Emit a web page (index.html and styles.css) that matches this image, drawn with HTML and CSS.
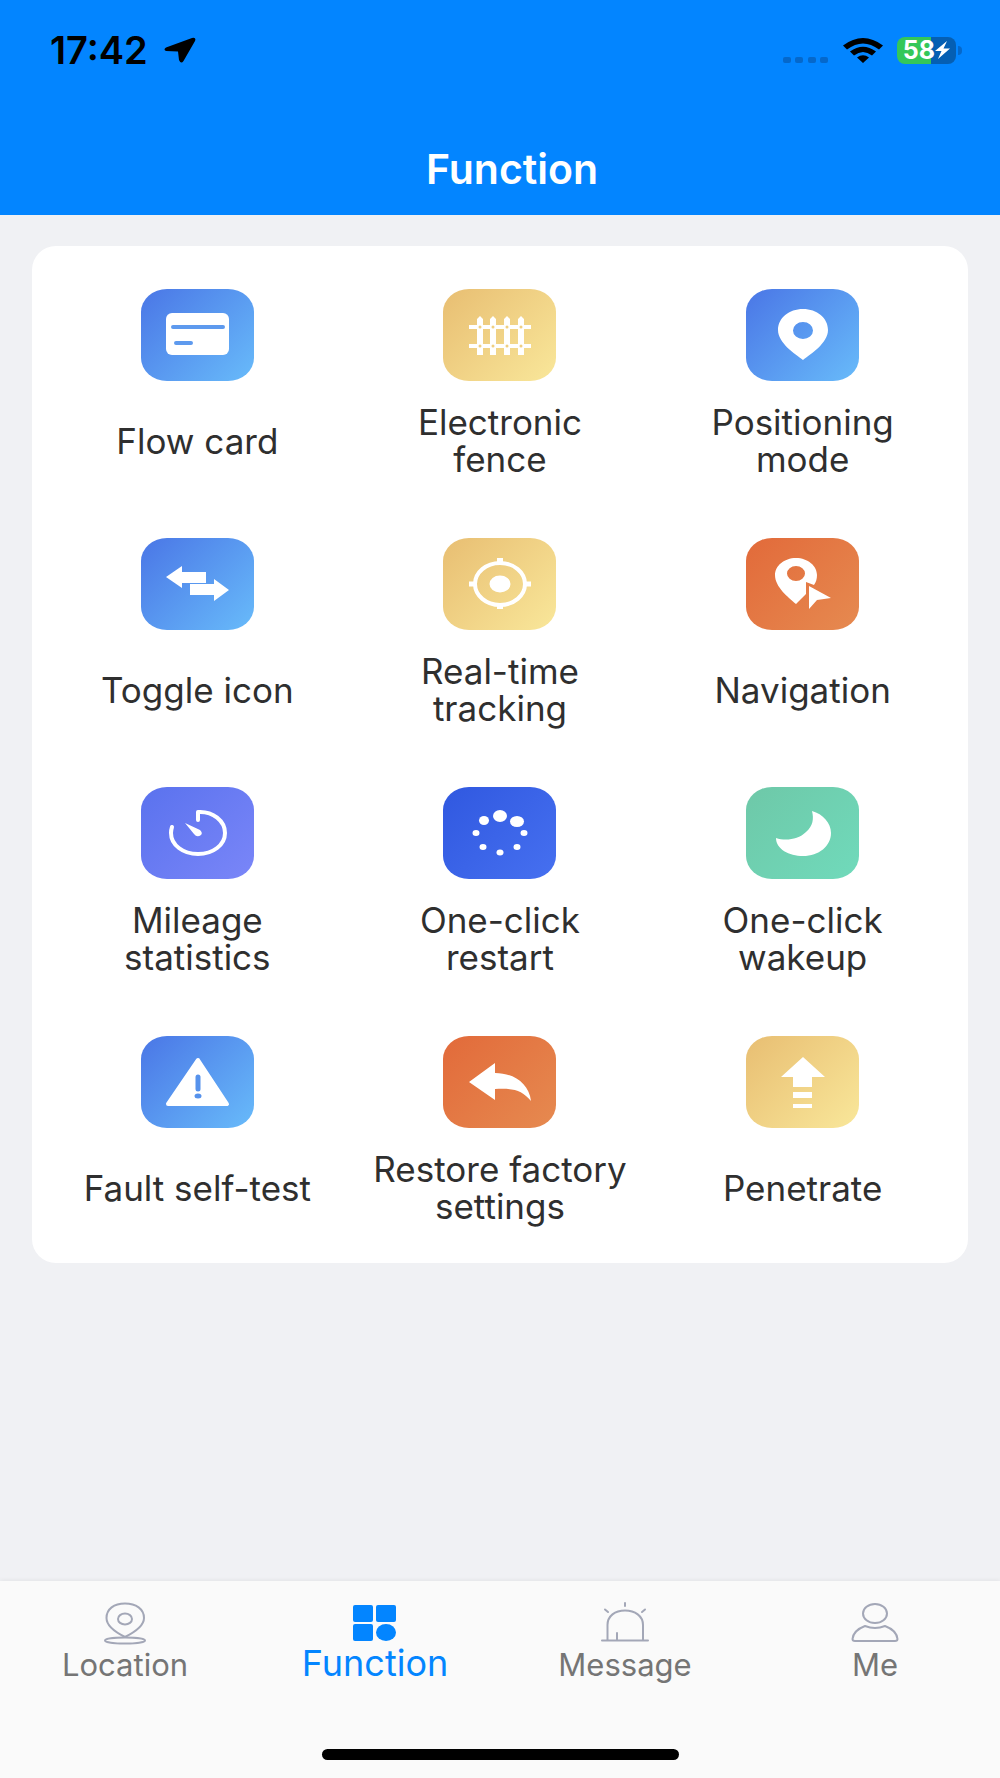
FILE: index.html
```html
<!DOCTYPE html>
<html lang="en">
<head>
  <meta charset="UTF-8" />
  <meta name="viewport" content="width=device-width, initial-scale=1.0"/>
  <title>Function</title>
  <link rel="stylesheet" href="styles.css">
</head>
<body>
  <header class="header">
    <div class="status-bar">
      <span class="clock">17:42</span>
      <svg class="arrow" width="32" height="26" viewBox="0 0 32 26"><path d="M28 1 2 10.500Q-1 12.500 2 14L14 14.500 15 23Q17 27.500 19.500 24L31 4Q32.500 0 28 1Z"/></svg>
      <div class="status-icons">
        <svg width="46" height="7" viewBox="0 0 46 7" fill="#0568cb"><rect width="8" height="6" rx="2"/><rect x="12" width="8" height="6" rx="2"/><rect x="25" width="8" height="6" rx="2"/><rect x="37" width="8" height="6" rx="2"/></svg>
        <svg width="40" height="25" viewBox="0 0 40 25"><path d="M0 7.500Q20-7.500 40 7.500L36 11.500Q20-.5 4 11.500ZM7 13.500Q20 4 33 13.500L29 17.500Q20 10.500 11 17.500ZM14 19.500Q20 15 26 19.500L20 25Z"/></svg>
        <div class="battery">
          <span class="battery-level">58</span>
          <svg width="15" height="18" viewBox="0 0 15 18"><path d="M12 0 0 10H6.500L3 18 15 7.500H8.500Z" fill="#fff"/></svg>
        </div>
      </div>
    </div>
    <h1>Function</h1>
  </header>

  <main>
    <div class="card">
      <button class="item">
        <svg class="icon blue" viewBox="0 0 113 92">
          <rect x="25" y="24" width="63" height="42" rx="6" fill="#fff"/>
          <path d="M32 38H82M35 54H50" stroke="#5e9aee" stroke-width="4" stroke-linecap="round"/>
        </svg>
        <span class="label">Flow card</span>
      </button>
      <button class="item">
        <svg class="icon sand" viewBox="0 0 113 92" fill="#fff">
          <path d="M26 36H88V40H26ZM26 55H88V59H26Z"/>
          <path d="M34 66V30L37 27 40 30V66ZM47 66V30L50 27 53 30V66ZM61 66V30L64 27 67 30V66ZM75 66V30L78 27 81 30V66Z"/>
          <g fill="#efcf80"><circle cx="37" cy="38" r="1.500"/><circle cx="50" cy="38" r="1.500"/><circle cx="64" cy="38" r="1.500"/><circle cx="78" cy="38" r="1.500"/><circle cx="37" cy="57" r="1.500"/><circle cx="50" cy="57" r="1.500"/><circle cx="64" cy="57" r="1.500"/><circle cx="78" cy="57" r="1.500"/></g>
        </svg>
        <span class="label">Electronic fence</span>
      </button>
      <button class="item">
        <svg class="icon blue" viewBox="0 0 113 92">
          <path fill="#fff" fill-rule="evenodd" d="M57 71C49 65 32 54 32 41 32 29 43 20 57 20S82 29 82 41C82 54 65 65 57 71ZM57 33A10 8.500 0 1 0 57 50 10 8.500 0 1 0 57 33Z"/>
        </svg>
        <span class="label">Positioning mode</span>
      </button>

      <button class="item">
        <svg class="icon blue" viewBox="0 0 113 92" fill="#fff">
          <path d="M25 39 41 28V34H65V45H41V50ZM88 52 73 41V46H49V57H73V63Z"/>
        </svg>
        <span class="label">Toggle icon</span>
      </button>
      <button class="item">
        <svg class="icon sand" viewBox="0 0 113 92" fill="none" stroke="#fff">
          <ellipse cx="57" cy="46" rx="25" ry="21" stroke-width="4"/>
          <ellipse cx="57" cy="46" rx="10.500" ry="8.500" fill="#fff" stroke="none"/>
          <path d="M57 20V27M57 65V71" stroke-width="6"/><path d="M26 46H32M82 46H88" stroke-width="5"/>
        </svg>
        <span class="label">Real-time tracking</span>
      </button>
      <button class="item">
        <svg class="icon orange" viewBox="0 0 113 92" fill="#fff">
          <path fill-rule="evenodd" d="M50 66C42 59 29 49 29 37 29 28 38 20 50 20S71 28 71 37C71 41 70 44 68 47L60 44V56ZM50 28A9 7.500 0 1 0 50 43 9 7.500 0 1 0 50 28Z"/>
          <path d="M63 48 85 60 71 62 63 71Z"/>
        </svg>
        <span class="label">Navigation</span>
      </button>

      <button class="item">
        <svg class="icon violet" viewBox="0 0 113 92">
          <path d="M57 33V25C72 24 84 34 84 46 84 58 72 67 57 67S30 58 30 46Q30 43 31 40" fill="none" stroke="#fff" stroke-width="4" stroke-linecap="round" stroke-linejoin="round"/>
          <path d="M44 36 59 43Q62 46 60 48 56 51 53 47Z" fill="#fff"/>
        </svg>
        <span class="label">Mileage statistics</span>
      </button>
      <button class="item">
        <svg class="icon royal" viewBox="0 0 113 92" fill="#fff">
          <ellipse cx="57" cy="29" rx="7" ry="6"/><ellipse cx="74" cy="34.500" rx="7" ry="5.500"/><ellipse cx="41" cy="33.500" rx="5" ry="4.500"/>
          <ellipse cx="33" cy="46" rx="3.500" ry="3"/><ellipse cx="81" cy="46" rx="3.500" ry="3"/><ellipse cx="40" cy="60" rx="3.500" ry="3"/><ellipse cx="74" cy="60" rx="3.500" ry="3"/><ellipse cx="57" cy="65.500" rx="3.500" ry="3"/>
        </svg>
        <span class="label">One-click restart</span>
      </button>
      <button class="item">
        <svg class="icon green" viewBox="0 0 113 92">
          <path fill="#fff" d="M66 24C77 27 85 36 85 46 85 59 73 69 57 69 43 69 30 62 30 51 39 54 52 53 60 45 67 39 68 32 66 24Z"/>
        </svg>
        <span class="label">One-click wakeup</span>
      </button>

      <button class="item">
        <svg class="icon blue" viewBox="0 0 113 92">
          <path d="M57 24 86 68H27Z" fill="#fff" stroke="#fff" stroke-width="4" stroke-linejoin="round"/>
          <path d="M57 41V53" stroke="#5692ec" stroke-width="5" stroke-linecap="round"/><ellipse cx="57" cy="60" rx="3.500" ry="2.500" fill="#5692ec"/>
        </svg>
        <span class="label">Fault self-test</span>
      </button>
      <button class="item">
        <svg class="icon orange" viewBox="0 0 113 92" fill="#fff">
          <path d="M26 46 52 27V37C70 37 86 47 88 65 79 54 70 52 52 53V64Z"/>
        </svg>
        <span class="label">Restore factory settings</span>
      </button>
      <button class="item">
        <svg class="icon sand" viewBox="0 0 113 92" fill="#fff">
          <path d="M57 21 79 41H66V51H47V41H35ZM47 56H66V62H47ZM47 68H66V72H47Z"/>
        </svg>
        <span class="label">Penetrate</span>
      </button>
    </div>
  </main>

  <nav class="tabs">
    <div class="tab-row">
      <a class="tab" href="#location">
        <svg width="50" height="44" viewBox="0 0 50 44"><path d="M25 36C17 32 6.500 25 6.500 17 6.500 8 14 2.500 25 2.500S44 8 44 17C44 25 33 32 25 36Z"/><ellipse cx="25" cy="18" rx="7" ry="5.500"/><ellipse cx="25" cy="39.500" rx="20" ry="3"/></svg>
        <span>Location</span>
      </a>
      <a class="tab active" href="#function">
        <svg width="50" height="44" viewBox="0 0 50 44"><rect x="3" y="4" width="20" height="17" rx="2"/><rect x="26" y="4" width="20" height="17" rx="2"/><rect x="3" y="23" width="20" height="17" rx="2"/><ellipse cx="36" cy="31.500" rx="10" ry="8.500"/></svg>
        <span>Function</span>
      </a>
      <a class="tab" href="#message">
        <svg width="50" height="44" viewBox="0 0 50 44"><path d="M2 39.500H48M7.500 39V24C7.500 15 15 9.500 25 9.500S43 15 43 24V39M17 39V32M25 2V5M5 8.500 8 11M45 8.500 42 11"/></svg>
        <span>Message</span>
      </a>
      <a class="tab" href="#me">
        <svg width="50" height="44" viewBox="0 0 50 44"><ellipse cx="25" cy="12.500" rx="12" ry="9.500"/><path d="M15 25Q25 29 35 25C43 28 47 33 47.500 38Q47.500 40 45 40H5Q2.500 40 2.500 38C3 33 7 28 15 25Z"/></svg>
        <span>Me</span>
      </a>
    </div>
    <div class="home-indicator"></div>
  </nav>
</body>
</html>
```
FILE: styles.css
```css
* {
  box-sizing: border-box;
}

body {
  font-family: Inter, "Liberation Sans", sans-serif;
  background-color: #f0f1f4;
  color: #2f2f2f;
  margin: 0;
  min-height: 100vh;
  display: flex;
  flex-direction: column;
}

.header {
  background-color: #0385ff;
  padding: 30px 40px 20px 50px;
  height: 215px;
  display: flex;
  flex-direction: column;
  justify-content: space-between;
}

.status-bar {
  display: flex;
  align-items: center;
  height: 40px;
}

.clock {
  font-size: 38px;
  font-weight: 600;
  color: #000;
}

.arrow {
  margin-left: 16px;
}

.status-icons {
  display: flex;
  align-items: center;
  gap: 14px;
  margin-left: auto;
}

.status-icons > svg:first-child {
  align-self: flex-end;
}

.battery {
  display: flex;
  align-items: center;
  justify-content: center;
  position: relative;
  width: 59px;
  height: 27px;
  border-radius: 8px;
  background: linear-gradient(90deg, #34c759 58%, #055fb3 58%);
  margin-right: 4px;
}

.battery::after {
  content: "";
  position: absolute;
  left: 61px;
  width: 4px;
  height: 9px;
  border-radius: 0 4px 4px 0;
  background-color: #0568cb;
}

.battery-level {
  color: #fff;
  font-size: 25px;
  font-weight: 700;
}

h1 {
  margin: 0;
  padding-left: 14px;
  font-size: 41px;
  font-weight: 600;
  line-height: 52px;
  text-align: center;
  color: #fff;
}

main {
  flex: 1;
  padding: 31px 32px;
}

.card {
  display: grid;
  grid-template-columns: repeat(3, 1fr);
  row-gap: 60px;
  background-color: #fff;
  border-radius: 24px;
  padding: 43px 14px 38px;
}

.item {
  display: flex;
  flex-direction: column;
  align-items: center;
  gap: 23px;
  padding: 0;
  border: none;
  background: none;
  font-family: inherit;
  color: inherit;
  cursor: pointer;
}

.icon {
  width: 113px;
  height: 92px;
  border-radius: 26px / 23px;
}

.blue {
  background: linear-gradient(135deg, #4a76e6, #68bbfa);
}

.sand {
  background: linear-gradient(135deg, #e8be72, #f9e79a);
}

.orange {
  background: linear-gradient(135deg, #e26a3a, #e68a50);
}

.violet {
  background: linear-gradient(135deg, #5a72ee, #7a86f8);
}

.royal {
  background: linear-gradient(135deg, #3058e0, #4670f0);
}

.green {
  background: linear-gradient(135deg, #6ec8a8, #70dabb);
}

.label {
  display: flex;
  align-items: center;
  max-width: 260px;
  height: 74px;
  font-size: 35px;
  line-height: 37px;
  text-align: center;
}

.tabs {
  display: flex;
  flex-direction: column;
  align-items: center;
  justify-content: space-between;
  height: 197px;
  padding: 20px 0 18px;
  background-color: #fafafa;
  box-shadow: 0 -1px 4px rgba(0, 0, 0, 0.06);
}

.tab-row {
  display: flex;
  width: 100%;
}

.tab {
  flex: 1;
  display: flex;
  flex-direction: column;
  align-items: center;
  font-size: 31px;
  line-height: 40px;
  color: #757575;
  text-decoration: none;
}

.tab svg {
  fill: none;
  stroke: #a3a7b7;
  stroke-width: 2;
  stroke-linecap: round;
  stroke-linejoin: round;
}

.tab.active {
  font-size: 36px;
  line-height: 36px;
  color: #0385ff;
}

.tab.active svg {
  fill: #0385ff;
  stroke: none;
}

.home-indicator {
  width: 357px;
  height: 11px;
  border-radius: 6px;
  background-color: #000;
}
```
